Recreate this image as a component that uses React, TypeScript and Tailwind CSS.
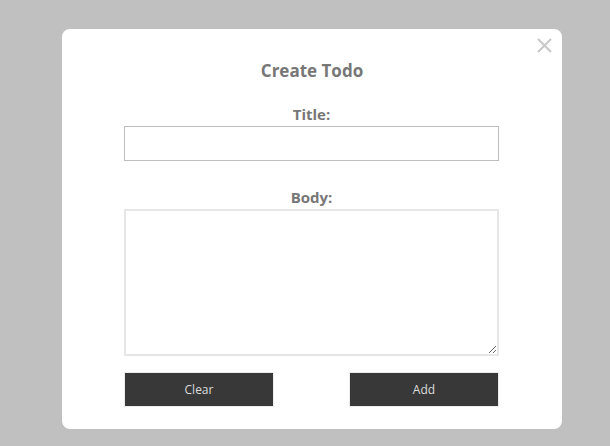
import React, { useState } from 'react';

const App: React.FC = () => {
  const [title, setTitle] = useState('');
  const [body, setBody] = useState('');

  const handleClear = () => {
    setTitle('');
    setBody('');
  };

  return (
    <div className="w-full h-[446px] bg-[#c0c0c0] overflow-hidden pt-[29px] pl-[62px] font-['Open_Sans',sans-serif]">
      <div className="relative w-[500px] h-[400px] bg-white rounded-[8px] flex flex-col items-center">
        {/* Close button */}
        <button className="absolute top-[6px] right-[8px] text-[#c8c8c8] w-[20px] h-[20px] flex items-center justify-center">
          <svg width="15" height="15" viewBox="0 0 15 15" fill="none" stroke="currentColor" strokeWidth="2">
            <path d="M1 1 L14 14 M14 1 L1 14" />
          </svg>
        </button>

        <h2 className="mt-[30px] text-[17px] leading-[24px] font-bold text-[#777]">Create Todo</h2>

        <div className="w-[375px] self-start ml-[62px] flex flex-col items-center mt-[21px]">
          <label className="text-[15px] leading-[20px] font-bold text-[#777] mb-[2px]">Title:</label>
          <input
            value={title}
            onChange={(e) => setTitle(e.target.value)}
            className="w-full h-[35px] border border-[#bdbdbd] px-2 outline-none"
          />

          <label className="mt-[26px] text-[15px] leading-[20px] font-bold text-[#777] mb-[2px]">Body:</label>
          <textarea
            value={body}
            onChange={(e) => setBody(e.target.value)}
            className="w-full h-[147px] border-2 border-[#e6e6e6] p-2 outline-none resize"
          />

          <div className="w-full flex justify-between mt-[16px]">
            <button
              onClick={handleClear}
              className="w-[150px] h-[35px] bg-[#383838] border border-[#ececec] text-[#dcdcdc] text-[12px]"
            >
              Clear
            </button>
            <button className="w-[150px] h-[35px] bg-[#383838] border border-[#ececec] text-[#dcdcdc] text-[12px]">
              Add
            </button>
          </div>
        </div>
      </div>
    </div>
  );
};

export default App;
